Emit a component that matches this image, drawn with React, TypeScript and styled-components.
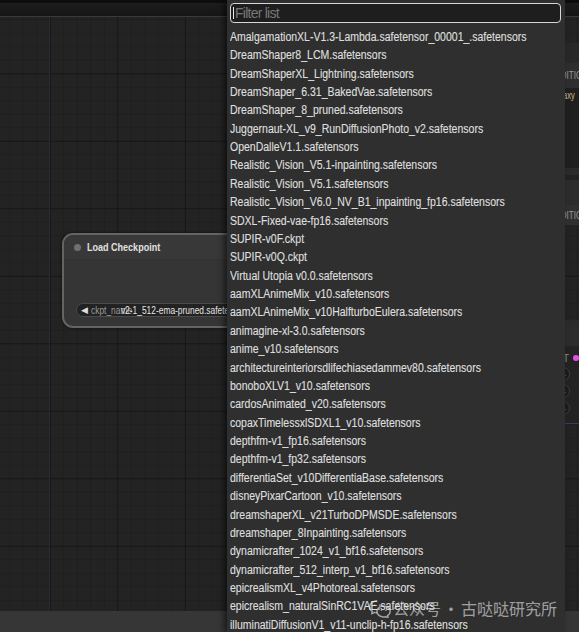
import React from "react";
import styled, { createGlobalStyle } from "styled-components";

const UI_FONT = `"Liberation Sans", Arial, sans-serif`;

const GlobalStyle = createGlobalStyle`
  html, body { margin: 0; padding: 0; background: #232323; }
  body { overflow: hidden; }
  #root { width: 579px; height: 632px; }
`;

const MODELS = [
  "AmalgamationXL-V1.3-Lambda.safetensor_00001_.safetensors",
  "DreamShaper8_LCM.safetensors",
  "DreamShaperXL_Lightning.safetensors",
  "DreamShaper_6.31_BakedVae.safetensors",
  "DreamShaper_8_pruned.safetensors",
  "Juggernaut-XL_v9_RunDiffusionPhoto_v2.safetensors",
  "OpenDalleV1.1.safetensors",
  "Realistic_Vision_V5.1-inpainting.safetensors",
  "Realistic_Vision_V5.1.safetensors",
  "Realistic_Vision_V6.0_NV_B1_inpainting_fp16.safetensors",
  "SDXL-Fixed-vae-fp16.safetensors",
  "SUPIR-v0F.ckpt",
  "SUPIR-v0Q.ckpt",
  "Virtual Utopia v0.0.safetensors",
  "aamXLAnimeMix_v10.safetensors",
  "aamXLAnimeMix_v10HalfturboEulera.safetensors",
  "animagine-xl-3.0.safetensors",
  "anime_v10.safetensors",
  "architectureinteriorsdlifechiasedammev80.safetensors",
  "bonoboXLV1_v10.safetensors",
  "cardosAnimated_v20.safetensors",
  "copaxTimelessxlSDXL1_v10.safetensors",
  "depthfm-v1_fp16.safetensors",
  "depthfm-v1_fp32.safetensors",
  "differentiaSet_v10DifferentiaBase.safetensors",
  "disneyPixarCartoon_v10.safetensors",
  "dreamshaperXL_v21TurboDPMSDE.safetensors",
  "dreamshaper_8Inpainting.safetensors",
  "dynamicrafter_1024_v1_bf16.safetensors",
  "dynamicrafter_512_interp_v1_bf16.safetensors",
  "epicrealismXL_v4Photoreal.safetensors",
  "epicrealism_naturalSinRC1VAE.safetensors",
  "illuminatiDiffusionV1_v11-unclip-h-fp16.safetensors",
];

/* ---------- page frame ---------- */

const Screen = styled.div`
  position: relative;
  width: 579px;
  height: 632px;
  overflow: hidden;
  display: flex;
  flex-direction: column;
  background: #232323;
  font-family: ${UI_FONT};
`;

const TopStrip = styled.div`
  flex: none;
  height: 3px;
  background: #0d0d10;
`;

const MenuBar = styled.div`
  flex: none;
  height: 13px;
  background: linear-gradient(#1d1d1d, #151515);
  border-bottom: 1px solid #3a3a3a;
`;

const Canvas = styled.div`
  position: relative;
  flex: 1;
  overflow: hidden;
  background-color: #232323;
  background-image:
    linear-gradient(to right, rgba(0, 0, 0, 0.26) 1px, transparent 1px),
    linear-gradient(to bottom, rgba(0, 0, 0, 0.26) 1px, transparent 1px),
    linear-gradient(to right, rgba(0, 0, 0, 0.13) 1px, transparent 1px),
    linear-gradient(to bottom, rgba(0, 0, 0, 0.13) 1px, transparent 1px);
  background-size: 67.5px 67.5px, 67.5px 67.5px, 13.5px 13.5px, 13.5px 13.5px;
  background-position: 49.8px 0, 0 56.3px, 9.3px 0, 0 2.3px;
`;

const StatusBar = styled.div`
  flex: none;
  height: 21px;
  background: #363636;
`;

/* condensed UI lettering: the narrow face is drawn by squeezing the glyphs */
const Condensed = styled.span<{ $scale?: number }>`
  display: inline-block;
  white-space: nowrap;
  transform: scaleX(${(p) => p.$scale ?? 0.82});
  transform-origin: 0 50%;
`;

/* ---------- graph elements ---------- */

const LinkWire = styled.div`
  position: absolute;
  left: 48.5px;
  top: 0;
  bottom: 0;
  width: 1.5px;
  background: #262b36;
`;

const CheckpointNode = styled.div`
  position: absolute;
  left: 62px;
  top: 216px;
  width: 320px;
  height: 95px;
  box-sizing: border-box;
  border: 2px solid #646464;
  border-radius: 11px;
  background: #353535;
  display: flex;
  flex-direction: column;
  overflow: hidden;
  box-shadow: 0 0 3px rgba(0, 0, 0, 0.6);
`;

const NodeTitle = styled.div`
  flex: none;
  height: 24px;
  display: flex;
  align-items: center;
  gap: 6px;
  padding-left: 10px;
  background: #383838;
  border-bottom: 1px solid #323232;
  color: #e0e0e0;
  font-size: 11px;
  font-weight: bold;
`;

const TitleDot = styled.span`
  flex: none;
  width: 7px;
  height: 7px;
  border-radius: 50%;
  background: #707070;
`;

const NodeBody = styled.div`
  flex: 1;
  display: flex;
  align-items: flex-end;
  padding: 0 0 9px 12px;
`;

const ComboWidget = styled.div`
  flex: 1;
  height: 14px;
  box-sizing: border-box;
  display: flex;
  align-items: center;
  border: 1px solid #4a4a4a;
  border-radius: 7px;
  background: #222222;
  font-size: 10.5px;
  white-space: nowrap;
  overflow: hidden;
`;

const ComboArrow = styled.span`
  flex: none;
  margin: 0 3px 0 4px;
  color: #dddddd;
  font-size: 9px;
  line-height: 9px;
`;

const ComboLabel = styled.span`
  color: #9a9a9a;
`;

const ComboValue = styled.span`
  margin-left: -14px;
  color: #e6e6e6;
`;

/* nodes further right, mostly hidden behind the open list */

const SideNode = styled.div<{ $top: number; $left: number; $width: number }>`
  position: absolute;
  top: ${(p) => p.$top}px;
  left: ${(p) => p.$left}px;
  width: ${(p) => p.$width}px;
  display: flex;
  flex-direction: column;
`;

const Band = styled.div<{ $h: number; $bg: string; $pad?: number; $color?: string }>`
  height: ${(p) => p.$h}px;
  background: ${(p) => p.$bg};
  padding-left: ${(p) => p.$pad ?? 0}px;
  color: ${(p) => p.$color ?? "#9a9a9a"};
  font-size: 10px;
  display: flex;
  align-items: center;
  white-space: nowrap;
  overflow: hidden;
`;

const TopAlignedBand = styled(Band)`
  align-items: flex-start;
  padding-top: 2px;
  box-sizing: border-box;
`;

const HelpBox = styled.span`
  margin-left: auto;
  margin-right: 6px;
  width: 10px;
  height: 13px;
  box-sizing: border-box;
  border: 1px solid #454545;
  border-radius: 3px;
  display: flex;
  align-items: center;
  justify-content: center;
`;

const SlotArea = styled.div`
  height: 78px;
  background: #232323;
  border-bottom: 1.5px solid #34405a;
  display: flex;
  flex-direction: column;
  padding-top: 6px;
  box-sizing: border-box;
`;

const SlotRow = styled.div`
  display: flex;
  align-items: center;
  justify-content: flex-end;
  gap: 4px;
  padding-right: 21px;
  color: #8a8a8a;
  font-size: 10px;
  height: 12px;
`;

const SlotDot = styled.span`
  width: 6px;
  height: 6px;
  border-radius: 50%;
  background: #e94ce9;
`;

const RoundButton = styled.span`
  margin: 3px 0 0 96px;
  width: 14px;
  height: 14px;
  box-sizing: border-box;
  border-radius: 50%;
  border: 1px solid #3c3c3c;
  background: #1c1c1c;
  color: #bdbdbd;
  font-size: 6px;
  display: flex;
  align-items: center;
  justify-content: center;
`;

/* ---------- combo list ---------- */

const ComboMenu = styled.div`
  position: absolute;
  left: 227px;
  top: 0;
  bottom: 0;
  width: 338px;
  box-sizing: border-box;
  padding: 3px 4px 0 3px;
  background: #2f2f2f;
  box-shadow: -3px 0 6px rgba(0, 0, 0, 0.55);
  display: flex;
  flex-direction: column;
  overflow: hidden;
`;

const FilterField = styled.div`
  position: relative;
  flex: none;
  &::after {
    content: "";
    position: absolute;
    left: 3px;
    top: 3.5px;
    width: 1px;
    height: 12px;
    background: #e8e8e8;
  }
`;

const FilterInput = styled.input`
  display: block;
  width: 100%;
  height: 19.5px;
  box-sizing: border-box;
  margin: 0;
  padding: 0 4px;
  border: 1.5px solid #d8d8d8;
  border-radius: 4px;
  background: #1e1e1e;
  color: #dddddd;
  font-family: ${UI_FONT};
  font-size: 14px;
  letter-spacing: -0.75px;
  outline: none;
  &::placeholder {
    color: #777777;
  }
`;

const MenuList = styled.ul`
  flex: none;
  list-style: none;
  width: 380px;
  margin: 5.3px 0 0;
  padding: 0;
  transform: scaleX(0.875);
  transform-origin: 0 0;
`;

const MenuItem = styled.li`
  height: 18.375px;
  line-height: 18.375px;
  color: #dedede;
  font-size: 12px;
  white-space: nowrap;
  overflow: hidden;
  -webkit-text-stroke: 0.15px #dedede;
`;

/* ---------- account mark ---------- */

const Watermark = styled.div`
  position: absolute;
  left: 367px;
  top: 599px;
  display: flex;
  align-items: center;
  color: rgba(236, 236, 236, 0.6);
  font-family: "Noto Sans CJK SC", sans-serif;
  font-size: 16px;
  line-height: 19px;
  white-space: nowrap;
  pointer-events: none;
`;

const MarkSeparator = styled.span`
  width: 20px;
  text-align: center;
`;

const ChatIcon = () => (
  <svg width="26" height="19" viewBox="0 0 27 21" fill="none" stroke="currentColor" strokeWidth="1.7">
    <path d="M10.5 2C5.8 2 2 5 2 8.7c0 2.1 1.2 3.9 3 5.1l-.7 2.6 3.1-1.6c.9.3 1.9.4 2.9.4" strokeLinejoin="round" />
    <path d="M17.5 7.8c-4.1 0-7.4 2.7-7.4 6s3.3 6 7.4 6c.8 0 1.6-.1 2.3-.3l2.6 1.3-.6-2.3c1.8-1.1 3-2.8 3-4.7 0-3.3-3.3-6-7.3-6z" strokeLinejoin="round" />
    <circle cx="7.6" cy="7" r="0.9" fill="currentColor" stroke="none" />
    <circle cx="13" cy="7" r="0.9" fill="currentColor" stroke="none" />
    <circle cx="15" cy="12.6" r="0.8" fill="currentColor" stroke="none" />
    <circle cx="20" cy="12.6" r="0.8" fill="currentColor" stroke="none" />
  </svg>
);

const BulbIcon = () => (
  <svg width="6" height="9" viewBox="0 0 6 9" fill="#8a8a8a">
    <circle cx="3" cy="3" r="2.6" />
    <rect x="1.8" y="5.5" width="2.4" height="2.8" />
  </svg>
);

export default function App() {
  return (
    <>
      <GlobalStyle />
      <Screen>
        <TopStrip />
        <MenuBar />
        <Canvas>
          <LinkWire />

          <CheckpointNode>
            <NodeTitle>
              <TitleDot />
              <Condensed $scale={0.82}>Load Checkpoint</Condensed>
            </NodeTitle>
            <NodeBody>
              <ComboWidget>
                <ComboArrow>◀</ComboArrow>
                <Condensed $scale={0.8}>
                  <ComboLabel>ckpt_name</ComboLabel>
                  <ComboValue>v2-1_512-ema-pruned.safetensors</ComboValue>
                </Condensed>
              </ComboWidget>
            </NodeBody>
          </CheckpointNode>

          <SideNode $top={26} $left={500} $width={120}>
            <Band $h={20} $bg="#282828" />
            <Band $h={25} $bg="#2e2e2e" $pad={43}>
              <Condensed $scale={0.8}>CONDITIONING</Condensed>
            </Band>
            <TopAlignedBand $h={80} $bg="#1f1f1f" $pad={53} $color="#c9b88f">
              <Condensed $scale={0.75}>galaxy</Condensed>
            </TopAlignedBand>
            <Band $h={7} $bg="#2b2b2b" />
          </SideNode>

          <SideNode $top={163} $left={500} $width={120}>
            <Band $h={25} $bg="#2c2c2c" />
            <Band $h={20} $bg="#303030" $pad={43}>
              <Condensed $scale={0.8}>CONDITIONING</Condensed>
            </Band>
          </SideNode>

          <SideNode $top={303} $left={460} $width={140}>
            <Band $h={7} $bg="#2a2a2a" />
            <Band $h={19} $bg="#2c2c2c">
              <HelpBox>
                <BulbIcon />
              </HelpBox>
            </Band>
            <SlotArea>
              <SlotRow>
                LATENT
                <SlotDot />
              </SlotRow>
              <RoundButton>▶</RoundButton>
              <RoundButton>▶</RoundButton>
              <RoundButton>▶</RoundButton>
            </SlotArea>
          </SideNode>
        </Canvas>
        <StatusBar />

        <ComboMenu>
          <FilterField>
            <FilterInput placeholder="Filter list" readOnly />
          </FilterField>
          <MenuList>
            {MODELS.map((name) => (
              <MenuItem key={name}>{name}</MenuItem>
            ))}
          </MenuList>
        </ComboMenu>

        <Watermark>
          <ChatIcon />
          <span>公众号</span>
          <MarkSeparator>·</MarkSeparator>
          <span>古哒哒研究所</span>
        </Watermark>
      </Screen>
    </>
  );
}
